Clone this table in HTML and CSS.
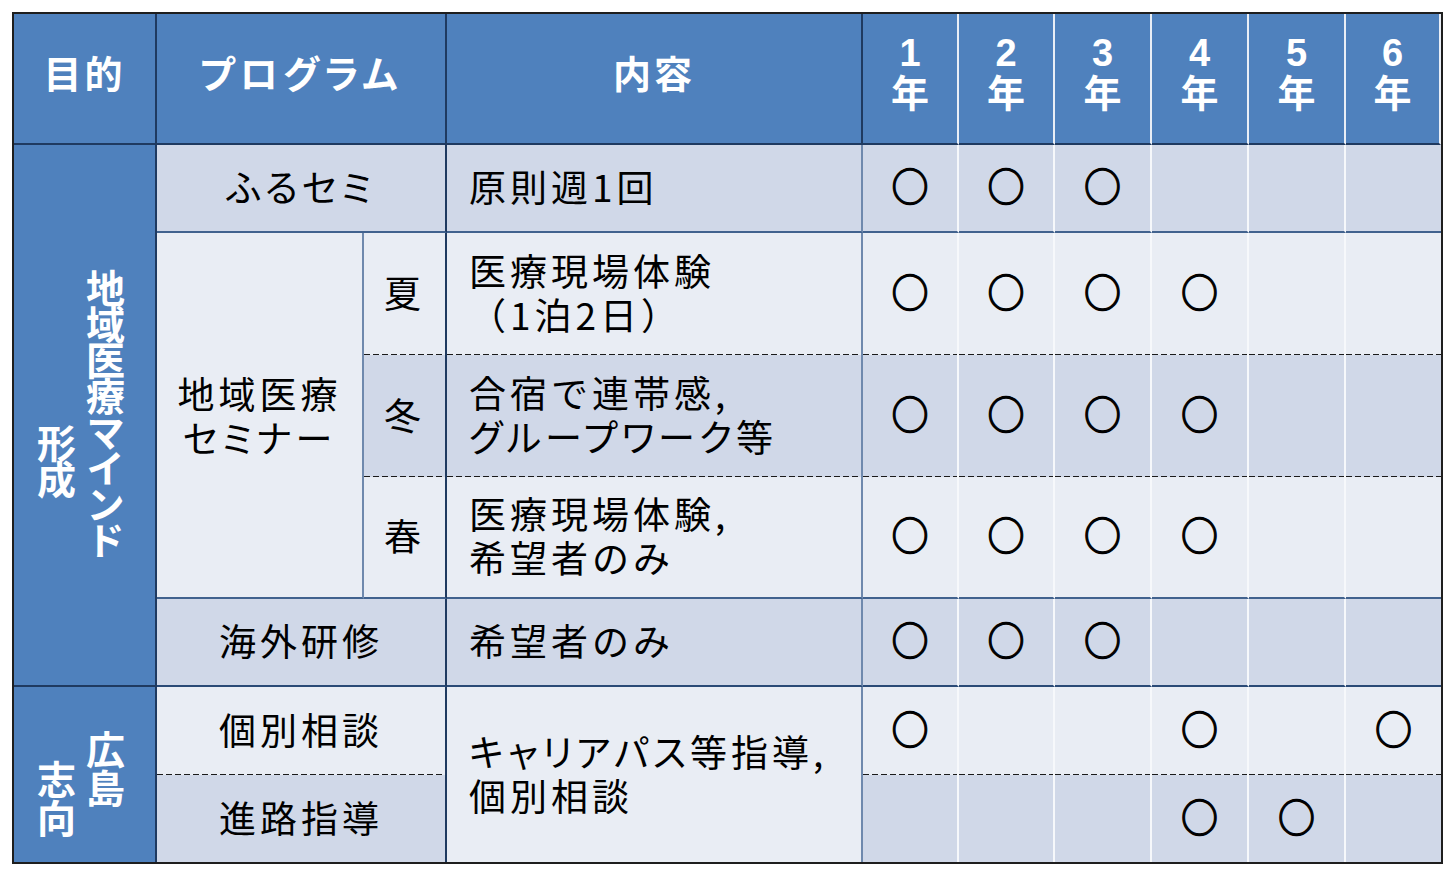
FILE: index.html
```html
<!DOCTYPE html>
<html lang="ja">
<head>
<meta charset="utf-8">
<title>プログラム表</title>
<link rel="stylesheet" href="styles.css">
</head>
<body>
<div class="page">
  <div class="grid">
    <div class="c h">目的</div>
    <div class="c h span2"><span class="p">プログラム</span></div>
    <div class="c h">内容</div>
    <div class="c h yr"><span class="num">1</span><span>年</span></div>
    <div class="c h yr"><span class="num">2</span><span>年</span></div>
    <div class="c h yr"><span class="num">3</span><span>年</span></div>
    <div class="c h yr"><span class="num">4</span><span>年</span></div>
    <div class="c h yr"><span class="num">5</span><span>年</span></div>
    <div class="c h yr last"><span class="num">6</span><span>年</span></div>

    <div class="c purpose rows5">
      <div class="vert-pair p1">
        <span class="vt">地域医療マインド</span>
        <span class="vt second">形成</span>
      </div>
    </div>
    <div class="c d prog span2"><span class="p">ふるセミ</span></div>
    <div class="c d content">原則週1回</div>
    <div class="c d y"><span class="mk">○</span></div>
    <div class="c d y"><span class="mk">○</span></div>
    <div class="c d y"><span class="mk">○</span></div>
    <div class="c d y"></div>
    <div class="c d y"></div>
    <div class="c d y last"></div>

    <div class="c l seminar rows3"><span>地域医療<br><span class="p">セミナー</span></span></div>
    <div class="c l season dash">夏</div>
    <div class="c l content dash"><span>医療現場体験<br>（1泊2日）</span></div>
    <div class="c l y dash"><span class="mk">○</span></div>
    <div class="c l y dash"><span class="mk">○</span></div>
    <div class="c l y dash"><span class="mk">○</span></div>
    <div class="c l y dash"><span class="mk">○</span></div>
    <div class="c l y dash"></div>
    <div class="c l y dash last"></div>

    <div class="c d season dash">冬</div>
    <div class="c d content dash"><span>合宿で連帯感,<br><span class="p">グループワーク</span>等</span></div>
    <div class="c d y dash"><span class="mk">○</span></div>
    <div class="c d y dash"><span class="mk">○</span></div>
    <div class="c d y dash"><span class="mk">○</span></div>
    <div class="c d y dash"><span class="mk">○</span></div>
    <div class="c d y dash"></div>
    <div class="c d y dash last"></div>

    <div class="c l season">春</div>
    <div class="c l content"><span>医療現場体験,<br>希望者のみ</span></div>
    <div class="c l y"><span class="mk">○</span></div>
    <div class="c l y"><span class="mk">○</span></div>
    <div class="c l y"><span class="mk">○</span></div>
    <div class="c l y"><span class="mk">○</span></div>
    <div class="c l y"></div>
    <div class="c l y last"></div>

    <div class="c d prog span2 navyb">海外研修</div>
    <div class="c d content navyb">希望者のみ</div>
    <div class="c d y navyb"><span class="mk">○</span></div>
    <div class="c d y navyb"><span class="mk">○</span></div>
    <div class="c d y navyb"><span class="mk">○</span></div>
    <div class="c d y navyb"></div>
    <div class="c d y navyb"></div>
    <div class="c d y navyb last"></div>

    <div class="c purpose rows2 bottom">
      <div class="vert-pair p2">
        <span class="vt wide">広島</span>
        <span class="vt wide second2">志向</span>
      </div>
    </div>
    <div class="c l prog span2 dash">個別相談</div>
    <div class="c l content rows2 bottom"><span><span class="p">キャリアパス</span>等指導,<br>個別相談</span></div>
    <div class="c l y dash"><span class="mk">○</span></div>
    <div class="c l y dash"></div>
    <div class="c l y dash"></div>
    <div class="c l y dash"><span class="mk">○</span></div>
    <div class="c l y dash"></div>
    <div class="c l y dash last"><span class="mk">○</span></div>

    <div class="c d prog span2 bottom">進路指導</div>
    <div class="c d y bottom"></div>
    <div class="c d y bottom"></div>
    <div class="c d y bottom"></div>
    <div class="c d y bottom"><span class="mk">○</span></div>
    <div class="c d y bottom"><span class="mk">○</span></div>
    <div class="c d y bottom last"></div>
  </div>
</div>
</body>
</html>
```

FILE: styles.css
```css
html, body {
  margin: 0;
  padding: 0;
  background: #ffffff;
}

.page {
  padding: 12px;
  font-family: "Noto Sans CJK JP", "Noto Sans", sans-serif;
  color: #000;
}

.grid {
  display: grid;
  width: max-content;
  grid-template-columns: 143px 207px 83px 416px 96px 96px 97px 97px 97px 95px;
  grid-template-rows: 131px 88px 122px 122px 122px 88px 88px 87px;
  border: 2px solid #1e1e1e;
}

.c {
  box-sizing: border-box;
  display: flex;
  align-items: center;
  justify-content: center;
  border-right: 2px solid #1f3a60;
  border-bottom: 2px solid #41628e;
  font-size: 37px;
  letter-spacing: 4px;
  line-height: 44px;
  text-align: center;
  padding-bottom: 4px;
}

.p {
  font-feature-settings: "palt";
  letter-spacing: 4px;
}

.span2 { grid-column: span 2; }
.rows5 { grid-row: span 5; }
.rows3 { grid-row: span 3; }
.rows2 { grid-row: span 2; }

/* header */
.h {
  background: #4f81bd;
  color: #fff;
  font-weight: 700;
  font-size: 38px;
  letter-spacing: 3px;
  border-bottom: 2px solid #1f3a60;
  border-right: 2px solid #1f3a60;
  padding-bottom: 14px;
}
.h .p { letter-spacing: 5px; }
.h.yr {
  flex-direction: column;
  line-height: 38px;
  letter-spacing: 0;
  border-right: 2px solid #e9eef6;
  padding-bottom: 13px;
}
.h.yr .num {
  font-family: "Liberation Sans", Arial, sans-serif;
  font-size: 38px;
}

/* purpose column */
.purpose {
  background: #4f81bd;
  color: #fff;
  font-weight: 700;
  border-right: 2px solid #1f3a60;
  border-bottom: 2px solid #1f3a60;
  padding-bottom: 0;
}
.vert-pair {
  display: flex;
  flex-direction: row-reverse;
  align-items: flex-start;
  gap: 8px;
}
.vt {
  writing-mode: vertical-rl;
  font-size: 39px;
  line-height: 41px;
  letter-spacing: -3px;
}
.vt.wide { letter-spacing: 0; }
.vt.second { padding-top: 155px; }
.vt.second2 { padding-top: 30px; }
.p1 { margin-left: -8px; margin-top: -4px; }
.p2 { margin-left: -8px; margin-top: 18px; }

/* row backgrounds */
.d { background: #d0d8e8; }
.l { background: #e9edf4; }

.prog { border-right: 2px solid #1f3a60; }
.seminar { border-right: 2px solid #6f89ad; padding-bottom: 0; }
.season { border-right: 2px solid #1f3a60; }
.content {
  justify-content: flex-start;
  text-align: left;
  padding-left: 22px;
  border-right: 2px solid #6f89ad;
}
.y {
  border-right: 2px solid #f6f8fb;
  padding-bottom: 8px;
}
.mk {
  font-weight: 700;
  letter-spacing: 0;
  -webkit-text-stroke: 1.2px #000;
  transform: scaleY(1.06);
}

.navyb { border-bottom: 2px solid #2a4a76; }

.dash {
  border-bottom: none;
  background-image: repeating-linear-gradient(to right, #1a1a1a 0 6px, transparent 6px 9px);
  background-size: 100% 1px;
  background-position: left bottom;
  background-repeat: no-repeat;
}

.last { border-right: none; }
.bottom { border-bottom: none; }
```
